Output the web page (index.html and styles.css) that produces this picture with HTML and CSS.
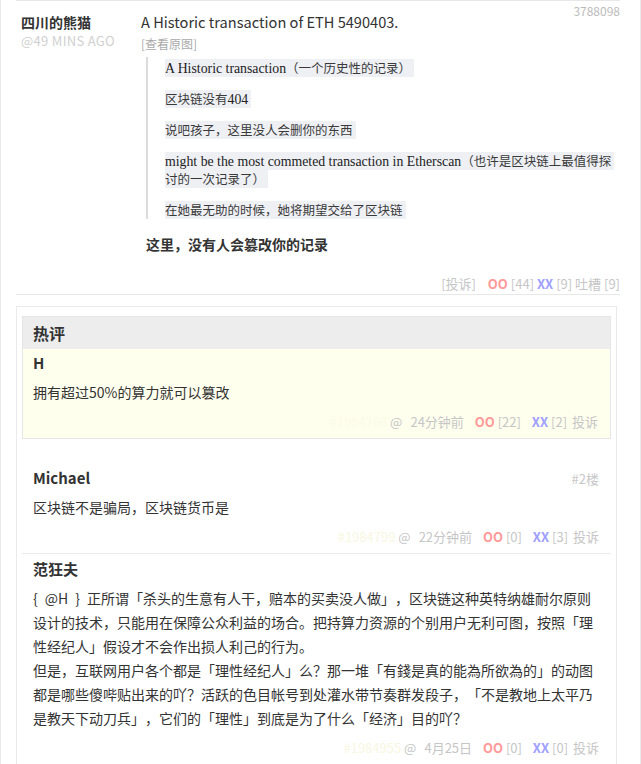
FILE: index.html
```html
<!DOCTYPE html>
<html lang="zh-CN">
<head>
<meta charset="utf-8">
<title>3788098</title>
<link rel="stylesheet" href="styles.css">
</head>
<body>
<div class="page">
  <article class="post">
    <div class="author">
      <div class="author-name">四川的熊猫</div>
      <div class="author-time">@49 MINS AGO</div>
    </div>
    <div class="post-body">
      <span class="post-id">3788098</span>
      <p class="post-title">A Historic transaction of ETH 5490403.</p>
      <a class="view-orig">[查看原图]</a>
      <div class="post-main">
        <div class="scan">
          <div class="scan-p"><span class="hl"><span class="lat">A Historic transaction</span>（一个历史性的记录）</span></div>
          <div class="scan-p"><span class="hl">区块链没有<span class="lat">404</span></span></div>
          <div class="scan-p"><span class="hl">说吧孩子，这里没人会删你的东西</span></div>
          <div class="scan-p"><span class="hl"><span class="lat">might be the most commeted transaction in Etherscan</span>（也许是区块链上最值得探</span><span class="hl">讨的一次记录了）</span></div>
          <div class="scan-p"><span class="hl">在她最无助的时候，她将期望交给了区块链</span></div>
        </div>
        <p class="post-emph">这里，没有人会篡改你的记录</p>
        <div class="post-foot">
          <span class="pf-report">[投诉]</span>
          <span class="oo">OO</span> [44] <span class="xx">XX</span> [9] 吐槽 [9]
        </div>
      </div>
    </div>
  </article>

  <section class="comments">
    <div class="hot">
      <div class="hot-title">热评</div>
      <div class="comment hot-item">
        <div class="c-head"><span class="c-name">H</span></div>
        <div class="c-text">拥有超过50%的算力就可以篡改</div>
        <div class="c-foot"><span class="c-hidden hot-hidden">#1984766</span> <span class="c-at">@</span>24分钟前 <span class="oo c-gap">OO</span> [22] <span class="xx c-gap2">XX</span> [2] <span class="c-rep">投诉</span></div>
      </div>
    </div>

    <div class="comment">
      <div class="c-head"><span class="c-name">Michael</span><span class="c-floor">#2楼</span></div>
      <div class="c-text">区块链不是骗局，区块链货币是</div>
      <div class="c-foot"><span class="c-hidden">#1984799</span> <span class="c-at">@</span>22分钟前 <span class="oo c-gap">OO</span> [0] <span class="xx c-gap2">XX</span> [3] <span class="c-rep">投诉</span></div>
    </div>

    <div class="comment">
      <div class="c-head"><span class="c-name">范狂夫</span></div>
      <div class="c-text long">{&#8194;@H&#8194;}&#8194;正所谓「杀头的生意有人干，赔本的买卖没人做」，区块链这种英特纳雄耐尔原则设计的技术，只能用在保障公众利益的场合。把持算力资源的个别用户无利可图，按照「理性经纪人」假设才不会作出损人利己的行为。<br>但是，互联网用户各个都是「理性经纪人」么？那一堆「有錢是真的能為所欲為的」的动图都是哪些傻哔贴出来的吖？活跃的色目帐号到处灌水带节奏群发段子，「不是教地上太平乃是教天下动刀兵」，它们的「理性」到底是为了什么「经济」目的吖？</div>
      <div class="c-foot"><span class="c-hidden">#1984955</span> <span class="c-at">@</span>4月25日 <span class="oo c-gap">OO</span> [0] <span class="xx c-gap2">XX</span> [0] <span class="c-rep">投诉</span></div>
    </div>
  </section>
</div>
</body>
</html>
```

FILE: styles.css
```css
* { box-sizing: border-box; }

html, body {
  margin: 0;
  padding: 0;
  background: #fff;
}

body {
  font-family: "Noto Sans CJK SC", "Noto Sans", sans-serif;
  color: #333;
  text-spacing-trim: space-all;
}

.page {
  width: 641px;
  min-height: 764px;
  border-left: 1px solid #eaeaea;
  border-right: 1px solid #eaeaea;
  padding: 0 20px 0 15px;
}

/* ---------- main post ---------- */
.post {
  display: flex;
  border-top: 1px solid #e8e8e8;
  border-bottom: 1px solid #e8e8e8;
}

.author {
  width: 125px;
  flex: none;
  padding-left: 5px;
  padding-top: 11px;
}

.author-name {
  font-size: 14px;
  font-weight: bold;
  line-height: 20px;
}

.author-time {
  font-size: 13px;
  line-height: 17px;
  color: #d0d0d0;
  letter-spacing: 0.3px;
}

.post-body {
  flex: 1;
  min-width: 0;
}

.post-id {
  float: right;
  margin-top: 2px;
  font-size: 12px;
  line-height: 16px;
  color: #bbb;
}

.post-title {
  margin: 10px 0 0;
  font-size: 14.6px;
  line-height: 22px;
}

.view-orig {
  display: block;
  margin-top: 2px;
  font-size: 12px;
  line-height: 18px;
  color: #aaa;
}

.post-main {
  padding-left: 5px;
  margin-top: 4px;
}

.scan {
  border-left: 2px solid #dcdcdc;
  padding: 2px 0 0 17px;
  display: flex;
  flex-direction: column;
  gap: 13px;
  font-family: "Noto Sans CJK SC", serif;
  font-size: 12.5px;
  color: #3a3a3a;
}

.scan-p {
  display: flex;
  flex-direction: column;
  align-items: flex-start;
}

.hl {
  display: block;
  height: 18px;
  line-height: 18px;
  background: #eef0f4;
  white-space: nowrap;
  padding-right: 3px;
}

.lat {
  font-family: "Liberation Serif", "DejaVu Serif", serif;
  font-size: 13.8px;
  color: #222;
}

.post-emph {
  margin: 15px 0 0;
  font-size: 14px;
  font-weight: bold;
  line-height: 20px;
}

.post-foot {
  margin-top: 20px;
  text-align: right;
  font-size: 13px;
  line-height: 20px;
  color: #c6c6c6;
}

.pf-report {
  margin-right: 9px;
}

.oo {
  color: #ff9a9a;
  font-weight: bold;
}

.xx {
  color: #a0a0ff;
  font-weight: bold;
}

/* ---------- comments ---------- */
.comments {
  margin-top: 11px;
  margin-right: 3px;
  border: 1px solid #eaeaea;
  padding: 9px 5px 0;
}

.hot {
  border: 1px solid #e6e6e6;
  margin-bottom: 24px;
}

.hot-title {
  height: 32px;
  line-height: 32px;
  padding-left: 10px;
  background: #ededed;
  font-size: 16px;
  font-weight: bold;
}

.comment {
  padding: 5px 12px 6px 11px;
  border-bottom: 1px solid #ececec;
}

.hot-item {
  background: #ffffee;
  border-bottom: none;
  padding: 4px 12px 6px 10px;
}

.c-head {
  display: flex;
  justify-content: space-between;
  align-items: center;
  height: 20px;
}

.c-name {
  font-size: 15px;
  font-weight: bold;
  line-height: 20px;
}

.c-floor {
  font-size: 13px;
  color: #c8c8c8;
}

.c-text {
  margin-top: 7px;
  font-size: 14px;
  line-height: 24px;
}

.c-text.long {
  width: 563px;
}

.c-foot {
  margin-top: 8px;
  text-align: right;
  font-size: 13px;
  line-height: 20px;
  color: #c6c6c6;
}

.c-at {
  margin-right: 8px;
}

.c-hidden {
  color: #f7f7e2;
}

.hot-hidden {
  color: #fbfbe8;
}

.c-gap {
  margin-left: 8px;
}

.c-gap2 {
  margin-left: 8px;
}

.c-rep {
  margin-left: 2px;
}
```
